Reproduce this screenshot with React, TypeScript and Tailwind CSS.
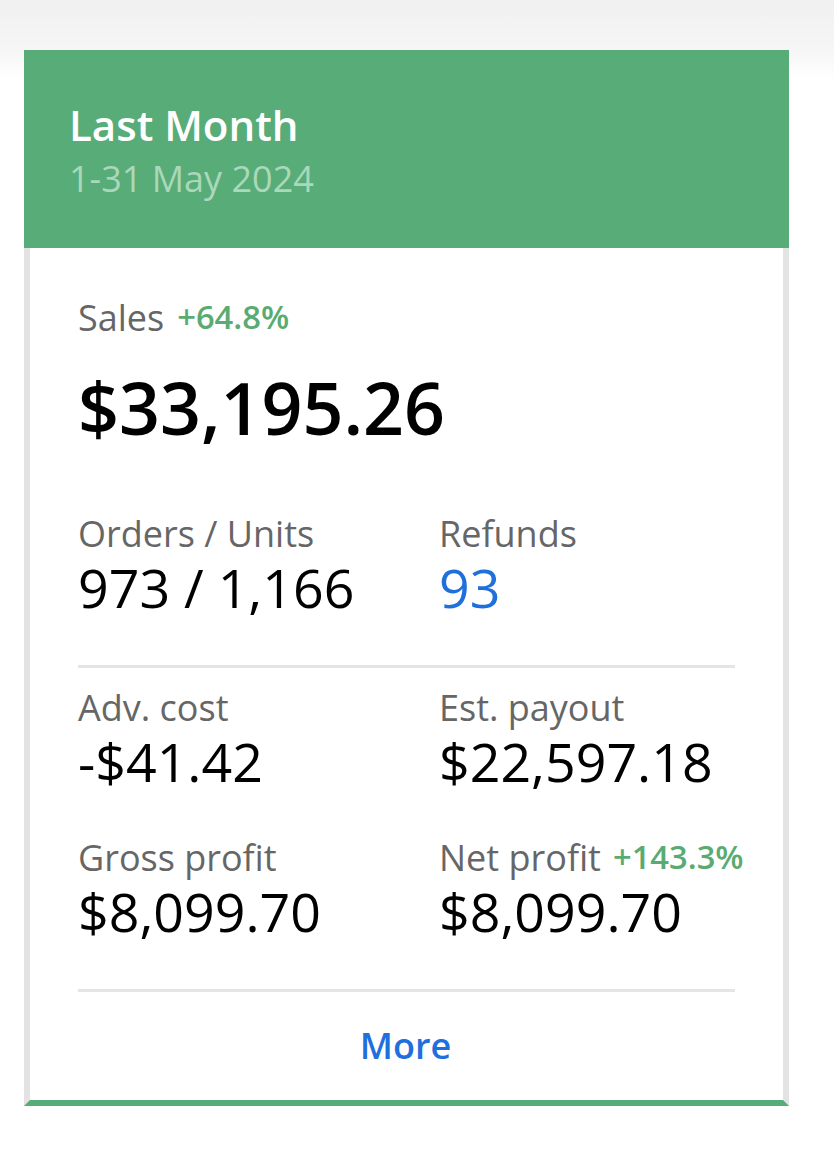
const font = "[font-family:'Open_Sans',sans-serif]"

function Stat({ label, value, delta, blue }: { label: string; value: string; delta?: string; blue?: boolean }) {
  return (
    <div className="w-[361px] shrink-0">
      <div className="flex items-baseline h-[36px] leading-[36px] whitespace-nowrap">
        <span className="text-[36px] text-[#666666]">{label}</span>
        {delta && <span className="ml-[12px] -translate-y-[2px] text-[32.7px] font-semibold text-[#5aab72]">{delta}</span>}
      </div>
      <div className={`text-[53.7px] leading-[72px] whitespace-nowrap ${blue ? 'text-[#1f6fdc]' : 'text-black'}`}>{value}</div>
    </div>
  )
}

export default function App() {
  return (
    <div className={`${font} h-[1149px] w-[834px] overflow-hidden pt-[50px] pl-[24px] bg-[linear-gradient(to_bottom,#f0f0f1_0px,#f6f6f6_50px,#ffffff_80px)]`}>
      <div className="w-[765px]">
        <div className="h-[198px] bg-[#58ac78] pl-[45px] pt-[50px]">
          <div className="text-[42px] leading-[50px] font-semibold text-white">Last Month</div>
          <div className="text-[36px] leading-[58px] text-[#aad8ba]">1-31 May 2024</div>
        </div>
        <div className="h-[858px] bg-white border-x-[6px] border-b-[6px] border-x-[#e3e3e3] border-b-[#58ac78] pl-[48px] pt-[52px]">
          <div className="flex items-baseline h-[36px] leading-[36px]">
            <span className="text-[36px] text-[#666666]">Sales</span>
            <span className="ml-[13px] -translate-y-[2px] text-[32.7px] font-semibold text-[#5aab72]">+64.8%</span>
          </div>
          <div className="mt-[26px] text-[71.7px] leading-[90px] font-semibold text-black">$33,195.26</div>
          <div className="mt-[64px] flex">
            <Stat label="Orders / Units" value="973 / 1,166" />
            <Stat label="Refunds" value="93" blue />
          </div>
          <div className="mt-[41px] h-[3px] w-[657px] bg-[#e5e5e5]" />
          <div className="mt-[22px] flex">
            <Stat label="Adv. cost" value="-$41.42" />
            <Stat label="Est. payout" value="$22,597.18" />
          </div>
          <div className="mt-[42px] flex">
            <Stat label="Gross profit" value="$8,099.70" />
            <Stat label="Net profit" value="$8,099.70" delta="+143.3%" />
          </div>
          <div className="mt-[41px] h-[3px] w-[657px] bg-[#e5e5e5]" />
          <div className="mt-[32px] w-[655px] text-center text-[36px] leading-[44px] font-semibold text-[#1f6fdc]">More</div>
        </div>
      </div>
    </div>
  )
}
